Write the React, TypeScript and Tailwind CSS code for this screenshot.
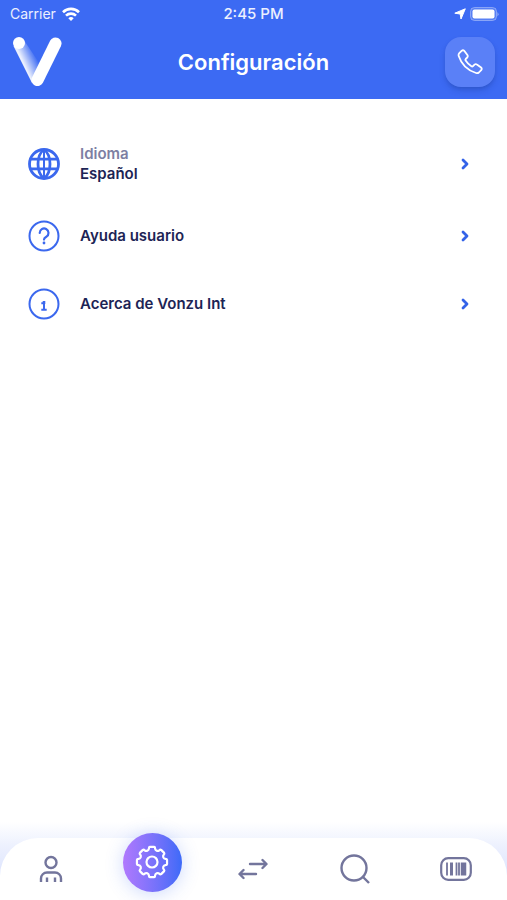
import type { ReactNode } from 'react';

const GEAR_TEETH = 8;

function polar(radius: number, degrees: number) {
  const a = (degrees * Math.PI) / 180;
  return `${(18 + radius * Math.sin(a)).toFixed(2)} ${(18 - radius * Math.cos(a)).toFixed(2)}`;
}

function gearPath() {
  let d = `M${polar(15.2, -8)}`;
  for (let i = 0; i < GEAR_TEETH; i++) {
    const a = (i * 360) / GEAR_TEETH;
    d += `L${polar(15.2, a + 8)}Q${polar(15.2, a + 12)} ${polar(13.8, a + 13)}`;
    d += `A2.6 2.6 0 0 0 ${polar(13.8, a + 32)}Q${polar(15.2, a + 33)} ${polar(15.2, a + 37)}`;
  }
  return d + 'Z';
}

function VonzuLogo() {
  return (
    <svg width="52" height="52" viewBox="0 0 52 52" fill="none" aria-hidden="true">
      <defs>
        <linearGradient id="logo-fade" x1="11" y1="26" x2="24" y2="20" gradientUnits="userSpaceOnUse">
          <stop offset="0" stopColor="#fff" stopOpacity="0.9" />
          <stop offset="1" stopColor="#fff" stopOpacity="0" />
        </linearGradient>
      </defs>
      <path d="M1.500 10 L20 47 L32 34 L12.500 5Z" fill="url(#logo-fade)" />
      <circle cx="7" cy="7" r="6" fill="#fff" />
      <path d="M43.500 7.500 L25.500 44" stroke="#fff" strokeWidth="12" strokeLinecap="round" />
    </svg>
  );
}

function WifiIcon() {
  return (
    <svg width="18" height="14" viewBox="0 0 18 14" fill="none" stroke="#fff" strokeWidth="2.600" aria-hidden="true">
      <path d="M1 5.200a11.400 11.400 0 0 1 16 0" />
      <path d="M4 8.600a7.200 7.200 0 0 1 10 0" />
      <path d="M9 14 6.300 11.200a3.900 3.900 0 0 1 5.400 0Z" fill="#fff" stroke="none" />
    </svg>
  );
}

function StatusBar() {
  return (
    <div className="grid h-7 grid-cols-3 items-center px-2 text-sm text-white/90">
      <div className="flex items-center gap-1.5 pl-0.5">
        Carrier
        <WifiIcon />
      </div>
      <div className="text-center text-[15px] font-medium">2:45 PM</div>
      <div className="flex items-center justify-end gap-1">
        <svg width="12" height="12" viewBox="0 0 12 12" fill="#fff" aria-hidden="true">
          <path d="M11.300.8 7 11 6.200 6 .8 5.200Z" stroke="#fff" strokeLinejoin="round" strokeWidth="1" />
        </svg>
        <svg width="29" height="14" viewBox="0 0 29 14" aria-hidden="true">
          <rect x=".5" y=".5" width="26" height="13" rx="4" fill="#fff" fillOpacity=".15" stroke="#fff" strokeOpacity=".35" />
          <rect x="2.500" y="2.500" width="22" height="9" rx="2" fill="#fff" />
          <path d="M27.500 5v4.500q2-2.200 0-4.500Z" fill="#fff" fillOpacity=".5" />
        </svg>
      </div>
    </div>
  );
}

function GlobeIcon() {
  return (
    <svg width="32" height="32" viewBox="0 0 32 32" fill="none" stroke="#3b68ee" strokeWidth="2.800" aria-hidden="true">
      <circle cx="16" cy="16" r="14.500" />
      <path d="M3 11.200h26M3 20.800h26M16 1.500C8 7.500 8 24.500 16 30.500M16 1.500c8 6 8 23 0 29" />
      <path d="M16 1.500v29" strokeWidth="2" />
    </svg>
  );
}

function HelpIcon() {
  return (
    <svg width="32" height="32" viewBox="0 0 32 32" fill="none" stroke="#3b68ee" strokeWidth="2" strokeLinecap="round" aria-hidden="true">
      <circle cx="16" cy="16" r="14.500" />
      <path d="M11.700 13a4.400 4.400 0 1 1 6.800 3.600c-1.600 1-2.500 1.500-2.500 3" strokeWidth="2.200" />
      <circle cx="16" cy="23" r="1.400" fill="#3b68ee" stroke="none" />
    </svg>
  );
}

function InfoIcon() {
  return (
    <svg width="32" height="32" viewBox="0 0 32 32" fill="none" stroke="#3b68ee" strokeWidth="2" aria-hidden="true">
      <circle cx="16" cy="16" r="14.500" />
      <path d="M13.300 15.300h2.700v6.200M13.300 21.700h5.400" />
      <path d="M16 13v3" strokeWidth="2.600" />
    </svg>
  );
}

function SettingRow({ icon, label, value }: { icon: ReactNode; label?: string; value: string }) {
  return (
    <li>
      <button type="button" className={`flex w-full items-center text-left text-[15px] leading-5 font-semibold text-[#1d2455] ${label ? 'h-12' : 'h-10'}`}>
        <span className="mr-5 shrink-0">{icon}</span>
        <span className="flex-1">
          {label && <span className="block text-[#7d7fa3]">{label}</span>}
          <span className="block">{value}</span>
        </span>
        <svg width="8" height="12" viewBox="0 0 8 12" fill="none" stroke="#3463e8" strokeWidth="2.800" strokeLinecap="round" strokeLinejoin="round" aria-hidden="true">
          <path d="M2 2l4 4-4 4" />
        </svg>
      </button>
    </li>
  );
}

function NavItem({ label, children }: { label: string; children: ReactNode }) {
  return (
    <button type="button" aria-label={label} className="flex h-full items-center justify-center text-[#73759c]">
      {children}
    </button>
  );
}

export default function App() {
  return (
    <div className="flex min-h-screen flex-col bg-white font-['Inter',sans-serif]">
      <header className="bg-[#3c6af3] pb-[11px]">
        <StatusBar />
        <div className="grid grid-cols-[52px_1fr_52px] items-center px-3 pt-2">
          <VonzuLogo />
          <h1 className="text-center text-[22px] leading-8 font-semibold text-white">Configuración</h1>
          <button type="button" aria-label="Llamar" className="flex size-[50px] items-center justify-center justify-self-end rounded-2xl bg-[#5a80f7] shadow-md shadow-blue-900/30">
            <svg width="26" height="26" viewBox="0 0 26 26" fill="none" stroke="#fff" strokeWidth="1.800" strokeLinejoin="round" aria-hidden="true">
              <path d="M2.300 4.200 4.800 1.700q1.200-1 2.600.2l3 4.200q.8 1.200-.2 2.400L8.700 10q-.6.700-.1 1.600 2.400 3.600 5.800 5.700.9.500 1.600-.2l1.500-1.500q1.200-1 2.400-.1l4.200 3q1.200 1.100.1 2.600l-2.300 2.400q-1.200 1-2.800.5Q6 20 1.700 7q-.5-1.600.6-2.800Z" />
            </svg>
          </button>
        </div>
      </header>

      <main className="flex-1 pt-[41px] pr-[38px] pl-7">
        <ul className="flex flex-col gap-7">
          <SettingRow icon={<GlobeIcon />} label="Idioma" value="Español" />
          <SettingRow icon={<HelpIcon />} value="Ayuda usuario" />
          <SettingRow icon={<InfoIcon />} value="Acerca de Vonzu Int" />
        </ul>
      </main>

      <div className="bg-linear-to-b from-white via-[#edf1fe] via-30% to-[#d0d9fd] pt-4">
        <nav aria-label="Principal" className="grid h-[62px] grid-cols-5 grid-rows-1 items-center rounded-t-[38px] bg-white">
          <NavItem label="Perfil">
            <svg width="24" height="28" viewBox="0 0 24 28" fill="none" stroke="currentColor" strokeWidth="2.400" aria-hidden="true">
              <circle cx="12" cy="7.500" r="5.500" />
              <path d="M2 27v-3.500a6 6 0 0 1 6-6h8a6 6 0 0 1 6 6V27M8 22.500V27M16 22.500V27" />
            </svg>
          </NavItem>
          <button type="button" aria-label="Configuración" aria-current="page" className="mb-3.5 flex size-[59px] items-center justify-center justify-self-center rounded-full bg-linear-to-r from-[#b078fd] to-[#3c6af8] shadow-[0_2px_18px_#3c6af340]">
            <svg width="36" height="36" viewBox="0 0 36 36" fill="none" stroke="#fff" strokeWidth="2.200" strokeLinejoin="round" aria-hidden="true">
              <path d={gearPath()} />
              <circle cx="18" cy="18" r="5.500" />
            </svg>
          </button>
          <NavItem label="Intercambiar">
            <svg width="30" height="22" viewBox="0 0 30 22" fill="none" stroke="currentColor" strokeWidth="2.400" strokeLinecap="round" strokeLinejoin="round" aria-hidden="true">
              <path d="M12 6h16M24.500 2l4 4-4 4M18 16H2M5.500 12l-4 4 4 4" />
            </svg>
          </NavItem>
          <NavItem label="Buscar">
            <svg width="30" height="30" viewBox="0 0 30 30" fill="none" stroke="currentColor" strokeWidth="2.400" aria-hidden="true">
              <circle cx="14" cy="14" r="12.500" />
              <path d="m22.500 22.500 6.500 6.500" />
            </svg>
          </NavItem>
          <NavItem label="Escanear">
            <svg width="32" height="24" viewBox="0 0 32 24" fill="none" stroke="currentColor" strokeWidth="2.200" aria-hidden="true">
              <rect x="1.200" y="1.200" width="29.600" height="21.600" rx="7" />
              <path d="M7 5.500v13M16.500 5.500v13M19 5.500v13" strokeWidth="1.800" />
              <path d="M11.500 5.500v13" strokeWidth="3" />
              <path d="M23.500 5.500v13" strokeWidth="5.500" />
            </svg>
          </NavItem>
        </nav>
      </div>
    </div>
  );
}
